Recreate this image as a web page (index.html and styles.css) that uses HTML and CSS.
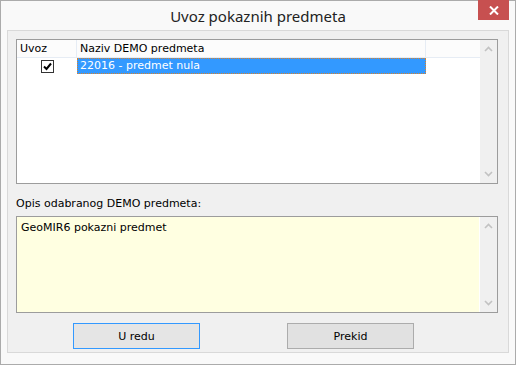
FILE: index.html
```html
<!DOCTYPE html>
<html lang="hr">

<head>
    <meta charset="UTF-8">
    <title>Uvoz pokaznih predmeta</title>
    <link rel="stylesheet" href="styles.css">
</head>

<body>
    <div class="window">
        <div class="title-bar">
            <div class="title">Uvoz pokaznih predmeta</div>
            <div class="close-btn">
                <svg width="10" height="9" viewBox="0 0 10 9">
                    <path d="M1 0.5 L9 8.5 M9 0.5 L1 8.5" stroke="#fff" stroke-width="2" fill="none" />
                </svg>
            </div>
        </div>

        <div class="client">
            <div class="list-box">
                <div class="list-content">
                    <div class="list-header">
                        <div class="col col-import">Uvoz</div>
                        <div class="col col-name">Naziv DEMO predmeta</div>
                        <div class="col col-rest"></div>
                    </div>
                    <div class="list-row">
                        <div class="col col-import">
                            <span class="checkbox">
                                <svg width="11" height="11" viewBox="0 0 11 11">
                                    <path d="M2 5.5 L4.5 8 L9 2.5" stroke="#000" stroke-width="2" fill="none" />
                                </svg>
                            </span>
                        </div>
                        <div class="col col-name selected">22016 - predmet nula</div>
                    </div>
                </div>
                <div class="scrollbar">
                    <svg class="arrow" width="9" height="6" viewBox="0 0 9 6">
                        <path d="M1 5 L4.5 1.5 L8 5" stroke="#c2c2c2" stroke-width="1.6" fill="none" />
                    </svg>
                    <svg class="arrow" width="9" height="6" viewBox="0 0 9 6">
                        <path d="M1 1 L4.5 4.5 L8 1" stroke="#c2c2c2" stroke-width="1.6" fill="none" />
                    </svg>
                </div>
            </div>

            <div class="desc-label">Opis odabranog DEMO predmeta:</div>

            <div class="desc-box">
                <div class="desc-text">GeoMIR6 pokazni predmet</div>
                <div class="scrollbar">
                    <svg class="arrow" width="9" height="6" viewBox="0 0 9 6">
                        <path d="M1 5 L4.5 1.5 L8 5" stroke="#c2c2c2" stroke-width="1.6" fill="none" />
                    </svg>
                    <svg class="arrow" width="9" height="6" viewBox="0 0 9 6">
                        <path d="M1 1 L4.5 4.5 L8 1" stroke="#c2c2c2" stroke-width="1.6" fill="none" />
                    </svg>
                </div>
            </div>

            <div class="buttons">
                <div class="button default">U redu</div>
                <div class="button">Prekid</div>
            </div>
        </div>
    </div>
</body>

</html>
```

FILE: styles.css
```css
body {
    margin: 0;
    font-family: "DejaVu Sans", sans-serif;
}

.window {
    width: 516px;
    height: 365px;
    box-sizing: border-box;
    border: 1px solid #ababab;
    background: #f9f9f9;
    display: flex;
    flex-direction: column;
    padding: 0 6px;
}

.title-bar {
    position: relative;
    height: 29px;
    display: flex;
    align-items: center;
    justify-content: center;
}

.title {
    font-family: "Noto Sans", sans-serif;
    font-size: 15px;
    color: #222;
    margin-top: 1px;
}

.close-btn {
    position: absolute;
    top: -1px;
    right: 0;
    width: 31px;
    height: 20px;
    background: #c75050;
    display: flex;
    align-items: center;
    justify-content: center;
}

.client {
    height: 323px;
    box-sizing: border-box;
    border: 1px solid #d9d9d9;
    background: #f0f0f0;
    padding: 8px 10px 0 8px;
    display: flex;
    flex-direction: column;
}

.list-box {
    height: 145px;
    box-sizing: border-box;
    border: 1px solid #9c9c9c;
    background: #fff;
    display: flex;
}

.list-content {
    flex: 1;
}

.list-header {
    display: flex;
    height: 17px;
    background: #fcfcfc;
    border-bottom: 1px solid #e6ecf4;
    font-size: 11px;
    color: #000;
}

.list-header .col {
    line-height: 17px;
    border-right: 1px solid #e6ecf4;
}

.col {
    box-sizing: border-box;
}

.col-import {
    width: 60px;
    padding-left: 3px;
}

.col-name {
    width: 349px;
    padding-left: 3px;
}

.col-rest {
    flex: 1;
    border-right: none !important;
}

.list-row {
    display: flex;
    height: 16px;
    font-size: 11px;
}

.list-row .col-import {
    display: flex;
    align-items: center;
    padding-left: 24px;
}

.checkbox {
    width: 13px;
    height: 13px;
    box-sizing: border-box;
    border: 1px solid #333;
    background: #fff;
    display: flex;
    align-items: center;
    justify-content: center;
}

.selected {
    background: #3399ff;
    color: #fff;
    border: 1px dotted #d9822b;
    line-height: 14px;
    padding-left: 2px;
}

.scrollbar {
    width: 17px;
    background: #f0f0f0;
    display: flex;
    flex-direction: column;
    align-items: center;
    justify-content: space-between;
    padding: 6px 0;
    box-sizing: border-box;
}

.desc-label {
    font-size: 11px;
    color: #000;
    margin: 13px 0 6px;
}

.desc-box {
    height: 97px;
    box-sizing: border-box;
    border: 1px solid #9c9c9c;
    background: #ffffe1;
    display: flex;
}

.desc-text {
    flex: 1;
    font-size: 11px;
    padding: 4px 4px;
}

.desc-box .scrollbar {
    border-left: 1px solid #fff;
    width: 18px;
}

.buttons {
    display: flex;
    gap: 87px;
    margin-top: 10px;
    padding-left: 57px;
}

.button {
    width: 127px;
    height: 26px;
    box-sizing: border-box;
    border: 1px solid #acacac;
    background: #e1e1e1;
    font-size: 11px;
    display: flex;
    align-items: center;
    justify-content: center;
}

.button.default {
    border-color: #3399ff;
    background: #e5e5e5;
}
```
